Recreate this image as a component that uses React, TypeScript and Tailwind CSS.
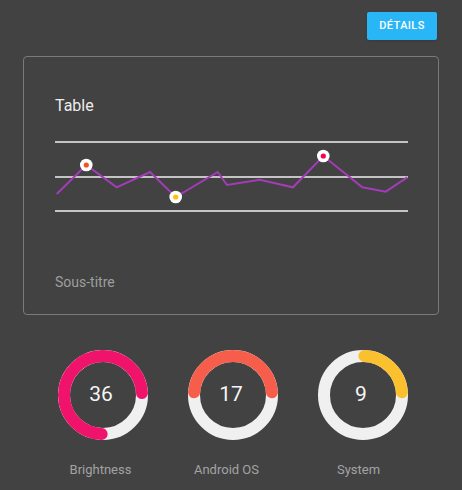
import React from 'react'

const points: [number, number][] = [
  [1.7, 64], [31.3, 35], [61.7, 57.3], [95, 42], [120.7, 67], [162.7, 42], [172, 55],
  [204.7, 49.7], [238, 57.3], [268.3, 26], [307.3, 57.3], [330.7, 61.7], [352.3, 47.3],
]

const markers = [
  { x: 31.3, y: 35, color: '#f4511e' },
  { x: 120.7, y: 67, color: '#ffc107' },
  { x: 268.3, y: 26, color: '#f50057' },
]

function polar(a: number) {
  const rad = (a * Math.PI) / 180
  return [45 + 39 * Math.sin(rad), 45 - 39 * Math.cos(rad)]
}

function arc(start: number, end: number) {
  const [x1, y1] = polar(start)
  const [x2, y2] = polar(end)
  const large = end - start > 180 ? 1 : 0
  return `M ${x1} ${y1} A 39 39 0 ${large} 1 ${x2} ${y2}`
}

const gauges = [
  { value: '36', label: 'Brightness', color: '#f0136b', start: 182, end: 447, shift: '-translate-x-[2px]' },
  { value: '17', label: 'Android OS', color: '#f65d4b', start: -86, end: 86, shift: '-translate-x-[6px]' },
  { value: '9', label: 'System', color: '#fbc02d', start: 2, end: 86, shift: '-translate-x-[4px]' },
]

function Gauge({ value, label, color, start, end, shift }: (typeof gauges)[number]) {
  return (
    <div className="flex w-[130px] flex-col items-center">
      <div className="relative h-[90px] w-[90px]">
        <svg width="90" height="90" viewBox="0 0 90 90">
          <circle cx="45" cy="45" r="39" fill="none" stroke="#f0f0f0" strokeWidth="12" />
          <path d={arc(start, end)} fill="none" stroke={color} strokeWidth="12" strokeLinecap="round" />
        </svg>
        <div className="absolute inset-0 flex items-center justify-center pr-[3px] text-[21px] text-[#f5f5f5]">
          {value}
        </div>
      </div>
      <span className={`mt-[21px] text-[13px] leading-[18px] text-[#a3a3a3] ${shift}`}>{label}</span>
    </div>
  )
}

export default function App() {
  return (
    <div className="h-[490px] w-[462px] bg-[#424242] pt-[12px] font-['Roboto',sans-serif]">
      <div className="flex justify-end pr-[25px]">
        <button className="h-[28px] w-[70px] rounded-[2px] bg-[#29b6f6] text-[11px] font-medium tracking-[0.4px] text-white shadow">
          DÉTAILS
        </button>
      </div>

      <div className="mx-[23px] mt-[16px] rounded-[4px] border border-[#7a7a7a] px-[31px] pb-[22px] pt-[37px]">
        <div className="text-[16px] leading-[24px] text-[#ececec]">Table</div>
        <svg className="mt-[12px] block" width="354" height="90" viewBox="0 0 354 90">
          {[12, 47, 81].map((y) => (
            <line key={y} x1="0" x2="353" y1={y} y2={y} stroke="#c4c4c4" strokeWidth="2" />
          ))}
          <polyline
            points={points.map((p) => p.join(',')).join(' ')}
            fill="none"
            stroke="#a43bb8"
            strokeWidth="2"
            strokeLinejoin="miter"
          />
          {markers.map((m) => (
            <g key={m.x}>
              <circle cx={m.x} cy={m.y} r="6.3" fill="#ffffff" />
              <circle cx={m.x} cy={m.y} r="2.6" fill={m.color} />
            </g>
          ))}
        </svg>
        <div className="mt-[52px] text-[14px] leading-[20px] text-[#9e9e9e]">Sous-titre</div>
      </div>

      <div className="mt-[35px] flex justify-center pl-[3px]">
        {gauges.map((g) => (
          <Gauge key={g.label} {...g} />
        ))}
      </div>
    </div>
  )
}
